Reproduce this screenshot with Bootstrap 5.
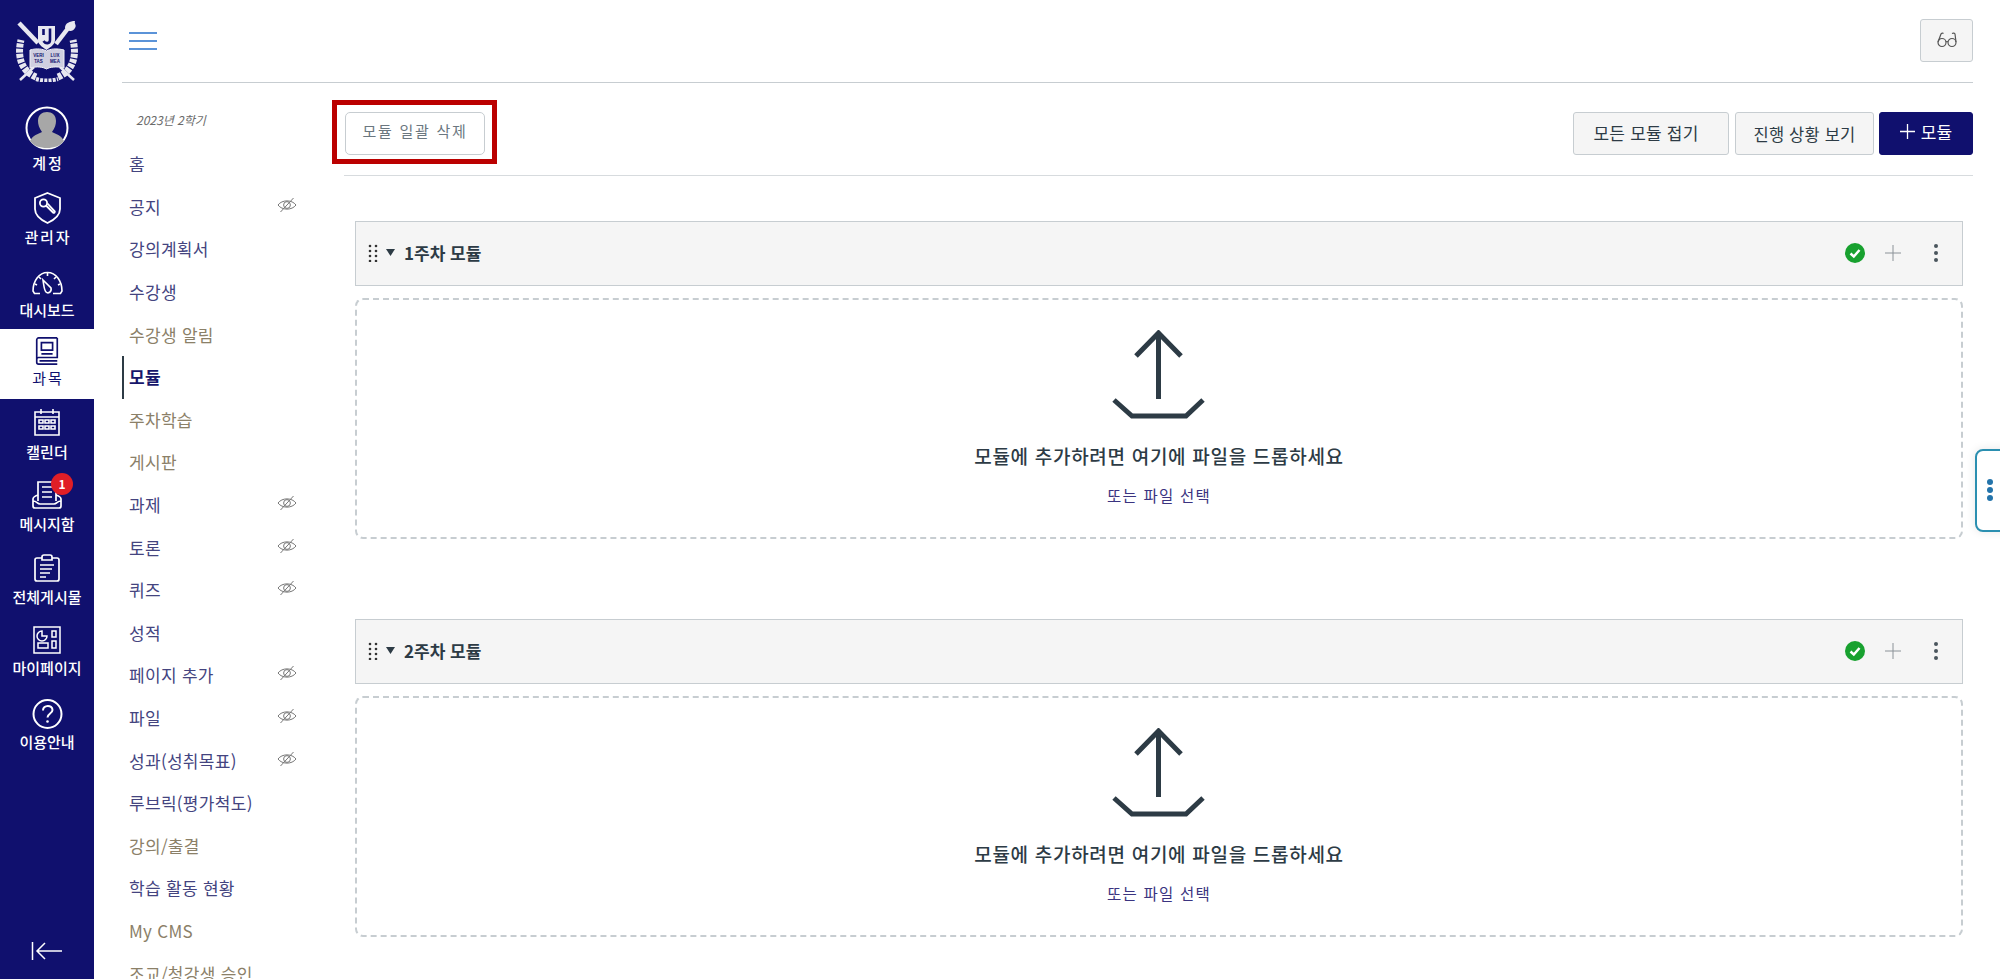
<!DOCTYPE html>
<html lang="ko">
<head>
    <meta charset="UTF-8">
    <title>모듈</title>
    <link rel="stylesheet" href="https://cdn.jsdelivr.net/npm/bootstrap@5.3.0/dist/css/bootstrap.min.css">
    <style>
        html, body { height: 979px; overflow: hidden; }
        body { background: #fff; font-family: "Noto Sans CJK KR", "Noto Sans", "Liberation Sans", sans-serif; color: #2d3b45; }
        .app-shell { height: 979px; position: relative; overflow: hidden; }

        /* left rail */
        .side-rail { width: 94px; flex: 0 0 94px; background: #10106e; color: #fff; height: 979px; }
        .rail-logo { height: 104px; padding-top: 20px; }
        .rail-item { height: 73px; padding-top: 9px; gap: 5px; font-size: 15px; font-weight: 500; line-height: 20px; color: #fff; text-decoration: none; position: relative; }
        .rail-item svg { display: block; flex: none; }
        .rail-account { height: 79px; padding-top: 2px; gap: 3px; }
        .rail-admin { height: 79px; gap: 3px; }
        .rail-dash { height: 67px; }
        .rail-item.is-current { background: #fff; color: #10106e; height: 70px; padding-top: 8px; gap: 3px; font-weight: 400; }
        .rail-cal { gap: 6px; }
        .rail-post { height: 72px; }
        .rail-my { height: 72px; gap: 4px; }
        .rail-help { padding-top: 10px; gap: 3px; }
        .wide-label { letter-spacing: 1.800px; margin-right: -1.800px; }
        .rail-badge { position: absolute; top: 1px; left: 51px; width: 22px; height: 22px; border-radius: 50%; background: #e01e26; font-size: 12px; font-weight: 700; line-height: 22px; text-align: center; color: #fff; }
        .rail-collapse { margin-top: auto; padding-bottom: 18px; }

        /* top bar */
        .top-bar { height: 83px; margin: 0 27px 0 28px; border-bottom: 1px solid #c7cdd1; }
        .menu-toggle { margin: 0 0 0 7px; }
        .glasses-btn { width: 53px; height: 43px; margin-top: -2px; padding: 0; background: #f5f5f5; border: 1px solid #c7cdd1; border-radius: 3px; }

        /* course menu */
        .course-menu { width: 250px; flex: 0 0 250px; padding-left: 28px; }
        .term-label { font-size: 12px; font-style: italic; color: #6b6b6b; padding: 28px 0 0 14px; height: 60px; line-height: 18px; }
        .menu-row { height: 42.600px; padding-left: 7px; font-size: 17px; line-height: 42px; color: #44447f; text-decoration: none; letter-spacing: .3px; white-space: nowrap; }
        .menu-row.tone-muted { color: #8b8068; }
        .menu-row.is-active { color: #16166b; font-weight: 700; border-left: 2px solid #2d3b45; padding-left: 5px; }
        .menu-row svg { margin: -4px 47px 0 0; }

        /* content */
        .content-pane { min-width: 0; padding-right: 27px; }
        .tool-row { padding: 29px 0 20px; border-bottom: 1px solid #d7dbde; }
        .tool-btn { height: 43px; padding: 0; background: #f5f5f5; border: 1px solid #c7cdd1; border-radius: 3px; color: #2d3b45; font-size: 16px; line-height: 40px; letter-spacing: .2px; }
        .tool-btn.collapse-all { width: 156px; font-size: 17px; padding: 0 10px 5px 0; margin-right: 6px; }
        .tool-btn.progress-view { width: 139px; font-size: 16.500px; margin-right: 5px; }
        .tool-btn.add-module { width: 94px; background: #10106e; border-color: #10106e; color: #fff; font-size: 17px; padding-bottom: 4px; gap: 6px; }
        .bulk-wrap { position: relative; margin-left: 1px; }
        .bulk-btn { width: 140px; height: 43px; padding: 0 0 4px; background: #fff; border: 1px solid #c7cdd1; border-radius: 5px; color: #6b7780; font-size: 15px; letter-spacing: 1.700px; }
        .bulk-wrap::after { content: ""; position: absolute; left: -13px; right: -12px; top: -12px; bottom: -9px; border: 5px solid #bb0000; pointer-events: none; }

        .module-block { margin: 45px 10px 0 11px; }
        .module-block + .module-block { margin-top: 80px; }
        .module-head { height: 65px; padding: 0 24px 2px 12px; background: #f5f5f5; border: 1px solid #c7cdd1; }
        .module-title { font-size: 17px; font-weight: 700; color: #2d3b45; margin-left: 9px; }
        .head-plus { margin-left: 20px; }
        .head-kebab { margin-left: 33px; }
        .drop-zone { height: 241px; margin-top: 12px; border: 2px dashed #c7cdd1; border-radius: 8px; padding-top: 30px; }
        .drop-title { font-size: 19px; font-weight: 500; line-height: 24px; margin-top: 24px; letter-spacing: .7px; color: #2d3b45; }
        .drop-link { font-size: 15.500px; line-height: 20px; margin-top: 17px; color: #3b3480; letter-spacing: 1.200px; text-decoration: none; }

        /* right tab */
        .tray-tab { position: absolute; left: 1975px; top: 449px; width: 40px; height: 83px; background: #fff; border: 2px solid #2b8fb0; border-radius: 8px; box-shadow: 0 0 10px rgba(0,0,0,.1); }
        .tray-dot { width: 6px; height: 6px; border-radius: 50%; background: #2374ab; margin-left: 10px; margin-bottom: 2px; }
    </style>
</head>
<body>
<svg width="0" height="0" class="position-absolute">
    <defs>
        <symbol id="eyeOff" viewBox="0 0 20 16">
            <path d="M1 8 C5 2.500 15 2.500 19 8 C15 13.500 5 13.500 1 8 Z" fill="none" stroke="#777" stroke-width="1"/>
            <circle cx="10" cy="8" r="3.400" fill="none" stroke="#777" stroke-width="1"/>
            <path d="M3.500 15 L16.500 1" stroke="#777" stroke-width="1"/>
        </symbol>
        <symbol id="uploadArrow" viewBox="0 0 94 90">
            <path d="M24 26 L46.500 3 L69 26 M46.500 4 V69 M2 70 L20 86 H74 L91 70" fill="none" stroke="#2d3b45" stroke-width="5"/>
        </symbol>
    </defs>
</svg>

<div class="d-flex app-shell">
    <nav class="side-rail d-flex flex-column">
        <div class="rail-logo d-flex justify-content-center">
            <svg width="62" height="62" viewBox="0 0 62 62" fill="none" stroke="#e8e8f0">
                <path d="M20 57 C5 51 1 36 5 20" stroke-width="7" stroke-dasharray="4 1.200"/>
                <path d="M42 57 C57 51 61 36 57 20" stroke-width="7" stroke-dasharray="4 1.200"/>
                <path d="M20 59 C27 61 35 61 42 59" stroke-width="4" stroke-dasharray="3 1.200"/>
                <path d="M3 3 L22 23" stroke-width="4.500"/>
                <path d="M40 24 L53 7" stroke-width="4.500"/>
                <path d="M49 8 C49 3 54 1 59 1 C58 4 61 5 59 8 C57 12 52 12 49 8 Z" fill="#e8e8f0" stroke="none"/>
                <path d="M18 47 L4 60 M44 47 L58 60" stroke-width="2.500"/>
                <path d="M22 6 H39 V20 C39 25 33 28 30.500 30 C28 28 22 25 22 20 Z" fill="#e8e8f0" stroke="none"/>
                <path d="M34 8.500 V20 C34 24 29.500 24 27.500 21 M27.500 9 V15" stroke="#10106e" stroke-width="2.600"/>
                <path d="M14 30 C21 28 27 29 30.500 31 C34 29 40 28 48 30 V48 C40 46 34 47 30.500 49 C27 47 21 46 14 48 Z" fill="#cfcfe0" stroke="#f0f0f6"/>
                <text x="22.500" y="37" font-size="4.500" font-family="Liberation Sans, sans-serif" font-weight="700" text-anchor="middle" fill="#10106e" stroke="none">VERI</text>
                <text x="22.500" y="42.500" font-size="4.500" font-family="Liberation Sans, sans-serif" font-weight="700" text-anchor="middle" fill="#10106e" stroke="none">TAS</text>
                <text x="39" y="37" font-size="4.500" font-family="Liberation Sans, sans-serif" font-weight="700" text-anchor="middle" fill="#10106e" stroke="none">LUX</text>
                <text x="39" y="42.500" font-size="4.500" font-family="Liberation Sans, sans-serif" font-weight="700" text-anchor="middle" fill="#10106e" stroke="none">MEA</text>
            </svg>
        </div>
        <a class="rail-item rail-account d-flex flex-column align-items-center" href="#">
            <svg width="44" height="44" viewBox="0 0 44 44">
                <circle cx="22" cy="22" r="20.500" fill="#10106e" stroke="#fff" stroke-width="2"/>
                <path d="M5 35 C8 29 13 28 17 26 C14 22 13 18 13 15 C13 9 17 6 22 6 C27 6 31 9 31 15 C31 18 30 22 27 26 C31 28 36 29 39 35 C35 40 29 42 22 42 C15 42 9 40 5 35 Z" fill="#a7a7a7"/>
            </svg>
            <span class="wide-label">계정</span>
        </a>
        <a class="rail-item rail-admin d-flex flex-column align-items-center" href="#">
            <svg width="27" height="32" viewBox="0 0 27 32" fill="none" stroke="#fff" stroke-width="1.800">
                <path d="M13.500 1 L26 6 V17 C26 24 20 28 13.500 31 C7 28 1 24 1 17 V6 Z"/>
                <circle cx="9.500" cy="11" r="3.600"/>
                <path d="M12 13.500 L19 20.500 C20 21.500 21.500 20 20.500 19 L13.500 11.500"/>
            </svg>
            <span class="wide-label">관리자</span>
        </a>
        <a class="rail-item rail-dash d-flex flex-column align-items-center" href="#">
            <svg width="31" height="24" viewBox="0 0 31 24" fill="none" stroke="#fff" stroke-width="1.600">
                <path d="M8 22.500 H2.500 L1 20 C1 10 7 1.500 15.500 1.500 C24 1.500 30 10 30 20 L28.500 22.500 H21"/>
                <path d="M15.500 2 V5 M7 6 L9 8 M24 6 L22 8 M3 13 L5 14 M28 13 L26 14"/>
                <path d="M11 9 L19 17 C20 21 16 23 14 21 C12 19 12 15 11 9 Z"/>
            </svg>
            <span>대시보드</span>
        </a>
        <a class="rail-item is-current d-flex flex-column align-items-center" href="#">
            <svg width="24" height="28" viewBox="0 0 24 30" fill="none" stroke="#10106e" stroke-width="1.800">
                <path d="M23 1 H3 C2 1 1 2 1 3 V27 C1 28 2 29 3 29 H23 M1 24 C1 23 2 22 3 22 H23 V1 M4 25.500 H23"/>
                <path d="M6 6 H18 V14 H6 Z M6 18 H18"/>
            </svg>
            <span class="wide-label">과목</span>
        </a>
        <a class="rail-item rail-cal d-flex flex-column align-items-center" href="#">
            <svg width="28" height="28" viewBox="0 0 28 28" fill="none" stroke="#fff" stroke-width="1.600">
                <path d="M2 4 H26 V27 H2 Z M2 9 H26 M8 1 V6 M20 1 V6"/>
                <path d="M6 12 H10 V15 H6 Z M12 12 H16 V15 H12 Z M18 12 H22 V15 H18 Z M6 18 H10 V21 H6 Z M12 18 H16 V21 H12 Z M18 18 H22 V21 H18 Z"/>
            </svg>
            <span>캘린더</span>
        </a>
        <a class="rail-item d-flex flex-column align-items-center" href="#">
            <svg width="30" height="28" viewBox="0 0 30 28" fill="none" stroke="#fff" stroke-width="1.700">
                <path d="M6 14 C3 15 1 16 1 18 V25 C1 26 2 27 3 27 H27 C28 27 29 26 29 25 V18 C29 16 27 15 24 14 M1 20 C5 20 5 23 8 23 H22 C25 23 25 20 29 20"/>
                <path d="M6 20 V1 H24 V20"/>
                <path d="M10 6 H20 M10 11 H20 M10 16 H20"/>
            </svg>
            <span>메시지함</span>
            <span class="rail-badge">1</span>
        </a>
        <a class="rail-item rail-post d-flex flex-column align-items-center" href="#">
            <svg width="26" height="28" viewBox="0 0 26 28" fill="none" stroke="#fff" stroke-width="1.700">
                <path d="M8 4 H3 C2 4 1 5 1 6 V25 C1 26 2 27 3 27 H23 C24 27 25 26 25 25 V6 C25 5 24 4 23 4 H18"/>
                <path d="M8 6 V3 C8 2 9 1 10 1 H16 C17 1 18 2 18 3 V6 Z"/>
                <path d="M6 11 H20 M6 15 H18 M6 19 H16 M6 23 H12"/>
            </svg>
            <span>전체게시물</span>
        </a>
        <a class="rail-item rail-my d-flex flex-column align-items-center" href="#">
            <svg width="28" height="28" viewBox="0 0 28 28" fill="none" stroke="#fff" stroke-width="1.500">
                <path d="M1 1 H27 V27 H1 Z"/>
                <path d="M14 10 A5 5 0 1 1 9 5 V10 Z M5 17 H15 V22 H5 Z M19 5 H23 V11 H19 Z M19 15 H23 V22 H19 Z"/>
            </svg>
            <span>마이페이지</span>
        </a>
        <a class="rail-item rail-help d-flex flex-column align-items-center" href="#">
            <svg width="31" height="30" viewBox="0 0 31 30" fill="none" stroke="#fff" stroke-width="2">
                <circle cx="15.500" cy="15" r="14"/>
                <path d="M11 11.500 C11 5.500 20.500 5.500 20.500 11 C20.500 14.500 15.500 14.500 15.500 18.500"/>
                <circle cx="15.500" cy="22.500" r="1.300" fill="#fff" stroke="none"/>
            </svg>
            <span>이용안내</span>
        </a>
        <div class="rail-collapse d-flex justify-content-center">
            <svg width="32" height="20" viewBox="0 0 32 20" fill="none" stroke="#fff" stroke-width="1.500">
                <path d="M1.500 1 V19 M31 10 H6 M14 2 L6 10 L14 18"/>
            </svg>
        </div>
    </nav>

    <div class="flex-grow-1">
        <header class="top-bar d-flex align-items-center justify-content-between">
            <button class="btn p-0 border-0 menu-toggle" type="button" aria-label="메뉴">
                <svg class="d-block" width="28" height="18" viewBox="0 0 28 18" stroke="#5b93d8" stroke-width="2"><path d="M0 1 H28 M0 9 H28 M0 17 H28"/></svg>
            </button>
            <button class="btn glasses-btn d-flex align-items-center justify-content-center" type="button" aria-label="학생 보기">
                <svg width="20" height="16" viewBox="0 0 20 16" fill="none" stroke="#555" stroke-width="1.200">
                    <circle cx="5" cy="10.500" r="4"/><circle cx="15" cy="10.500" r="4"/>
                    <path d="M9 10 C9.500 9.300 10.500 9.300 11 10 M1 10 L4 2 C4.400 1 6 1 6.500 1.500 M19 10 L18 2 C17.800 1 16 1 15 1.500"/>
                </svg>
            </button>
        </header>

        <div class="d-flex">
            <aside class="course-menu">
                <div class="term-label">2023년 2학기</div>
                <a class="menu-row d-flex justify-content-between align-items-center" href="#">홈</a>
                <a class="menu-row d-flex justify-content-between align-items-center" href="#">공지<svg width="20" height="16"><use href="#eyeOff"/></svg></a>
                <a class="menu-row d-flex justify-content-between align-items-center" href="#">강의계획서</a>
                <a class="menu-row d-flex justify-content-between align-items-center" href="#">수강생</a>
                <a class="menu-row tone-muted d-flex justify-content-between align-items-center" href="#">수강생 알림</a>
                <a class="menu-row is-active d-flex justify-content-between align-items-center" href="#">모듈</a>
                <a class="menu-row tone-muted d-flex justify-content-between align-items-center" href="#">주차학습</a>
                <a class="menu-row tone-muted d-flex justify-content-between align-items-center" href="#">게시판</a>
                <a class="menu-row d-flex justify-content-between align-items-center" href="#">과제<svg width="20" height="16"><use href="#eyeOff"/></svg></a>
                <a class="menu-row d-flex justify-content-between align-items-center" href="#">토론<svg width="20" height="16"><use href="#eyeOff"/></svg></a>
                <a class="menu-row d-flex justify-content-between align-items-center" href="#">퀴즈<svg width="20" height="16"><use href="#eyeOff"/></svg></a>
                <a class="menu-row d-flex justify-content-between align-items-center" href="#">성적</a>
                <a class="menu-row d-flex justify-content-between align-items-center" href="#">페이지 추가<svg width="20" height="16"><use href="#eyeOff"/></svg></a>
                <a class="menu-row d-flex justify-content-between align-items-center" href="#">파일<svg width="20" height="16"><use href="#eyeOff"/></svg></a>
                <a class="menu-row d-flex justify-content-between align-items-center" href="#">성과(성취목표)<svg width="20" height="16"><use href="#eyeOff"/></svg></a>
                <a class="menu-row d-flex justify-content-between align-items-center" href="#">루브릭(평가척도)</a>
                <a class="menu-row tone-muted d-flex justify-content-between align-items-center" href="#">강의/출결</a>
                <a class="menu-row d-flex justify-content-between align-items-center" href="#">학습 활동 현황</a>
                <a class="menu-row tone-muted d-flex justify-content-between align-items-center" href="#">My CMS</a>
                <a class="menu-row tone-muted d-flex justify-content-between align-items-center" href="#">조교/청강생 승인</a>
            </aside>

            <main class="content-pane flex-grow-1">
                <div class="tool-row d-flex justify-content-between">
                    <div class="bulk-wrap"><button class="btn bulk-btn" type="button">모듈 일괄 삭제</button></div>
                    <div class="d-flex">
                        <button class="btn tool-btn collapse-all" type="button">모든 모듈 접기</button>
                        <button class="btn tool-btn progress-view" type="button">진행 상황 보기</button>
                        <button class="btn tool-btn add-module d-flex align-items-center justify-content-center" type="button">
                            <svg width="15" height="15" viewBox="0 0 15 15" stroke="#fff" stroke-width="1.300"><path d="M7.500 0 V15 M0 7.500 H15"/></svg>모듈
                        </button>
                    </div>
                </div>

                <section class="module-block">
                    <div class="module-head d-flex align-items-center">
                        <svg width="10" height="18" viewBox="0 0 10 18" fill="#333"><circle cx="2" cy="2" r="1.300"/><circle cx="8" cy="2" r="1.300"/><circle cx="2" cy="7" r="1.300"/><circle cx="8" cy="7" r="1.300"/><circle cx="2" cy="12" r="1.300"/><circle cx="8" cy="12" r="1.300"/><circle cx="2" cy="17" r="1.300"/><circle cx="8" cy="17" r="1.300"/></svg>
                        <svg class="ms-2" width="9" height="7" viewBox="0 0 9 7" fill="#2d3b45"><path d="M0 0 H9 L4.500 7 Z"/></svg>
                        <span class="module-title">1주차 모듈</span>
                        <svg class="ms-auto" width="20" height="20" viewBox="0 0 20 20"><circle cx="10" cy="10" r="10" fill="#18a12f"/><path d="M5.500 10.500 L8.800 13.500 L14.500 7" fill="none" stroke="#fff" stroke-width="2.500"/></svg>
                        <svg class="head-plus" width="16" height="16" viewBox="0 0 16 16" stroke="#8b9298"><path d="M8 0 V16 M0 8 H16"/></svg>
                        <svg class="head-kebab" width="4" height="18" viewBox="0 0 4 18" fill="#4a555d"><circle cx="2" cy="2" r="2"/><circle cx="2" cy="9" r="2"/><circle cx="2" cy="16" r="2"/></svg>
                    </div>
                    <div class="drop-zone d-flex flex-column align-items-center">
                        <svg width="94" height="90"><use href="#uploadArrow"/></svg>
                        <div class="drop-title">모듈에 추가하려면 여기에 파일을 드롭하세요</div>
                        <a class="drop-link" href="#">또는 파일 선택</a>
                    </div>
                </section>

                <section class="module-block">
                    <div class="module-head d-flex align-items-center">
                        <svg width="10" height="18" viewBox="0 0 10 18" fill="#333"><circle cx="2" cy="2" r="1.300"/><circle cx="8" cy="2" r="1.300"/><circle cx="2" cy="7" r="1.300"/><circle cx="8" cy="7" r="1.300"/><circle cx="2" cy="12" r="1.300"/><circle cx="8" cy="12" r="1.300"/><circle cx="2" cy="17" r="1.300"/><circle cx="8" cy="17" r="1.300"/></svg>
                        <svg class="ms-2" width="9" height="7" viewBox="0 0 9 7" fill="#2d3b45"><path d="M0 0 H9 L4.500 7 Z"/></svg>
                        <span class="module-title">2주차 모듈</span>
                        <svg class="ms-auto" width="20" height="20" viewBox="0 0 20 20"><circle cx="10" cy="10" r="10" fill="#18a12f"/><path d="M5.500 10.500 L8.800 13.500 L14.500 7" fill="none" stroke="#fff" stroke-width="2.500"/></svg>
                        <svg class="head-plus" width="16" height="16" viewBox="0 0 16 16" stroke="#8b9298"><path d="M8 0 V16 M0 8 H16"/></svg>
                        <svg class="head-kebab" width="4" height="18" viewBox="0 0 4 18" fill="#4a555d"><circle cx="2" cy="2" r="2"/><circle cx="2" cy="9" r="2"/><circle cx="2" cy="16" r="2"/></svg>
                    </div>
                    <div class="drop-zone d-flex flex-column align-items-center">
                        <svg width="94" height="90"><use href="#uploadArrow"/></svg>
                        <div class="drop-title">모듈에 추가하려면 여기에 파일을 드롭하세요</div>
                        <a class="drop-link" href="#">또는 파일 선택</a>
                    </div>
                </section>
            </main>
        </div>
    </div>

    <div class="tray-tab d-flex flex-column justify-content-center">
        <span class="tray-dot"></span><span class="tray-dot"></span><span class="tray-dot"></span>
    </div>
</div>

<script src="https://cdn.jsdelivr.net/npm/bootstrap@5.3.0/dist/js/bootstrap.bundle.min.js"></script>
</body>
</html>
